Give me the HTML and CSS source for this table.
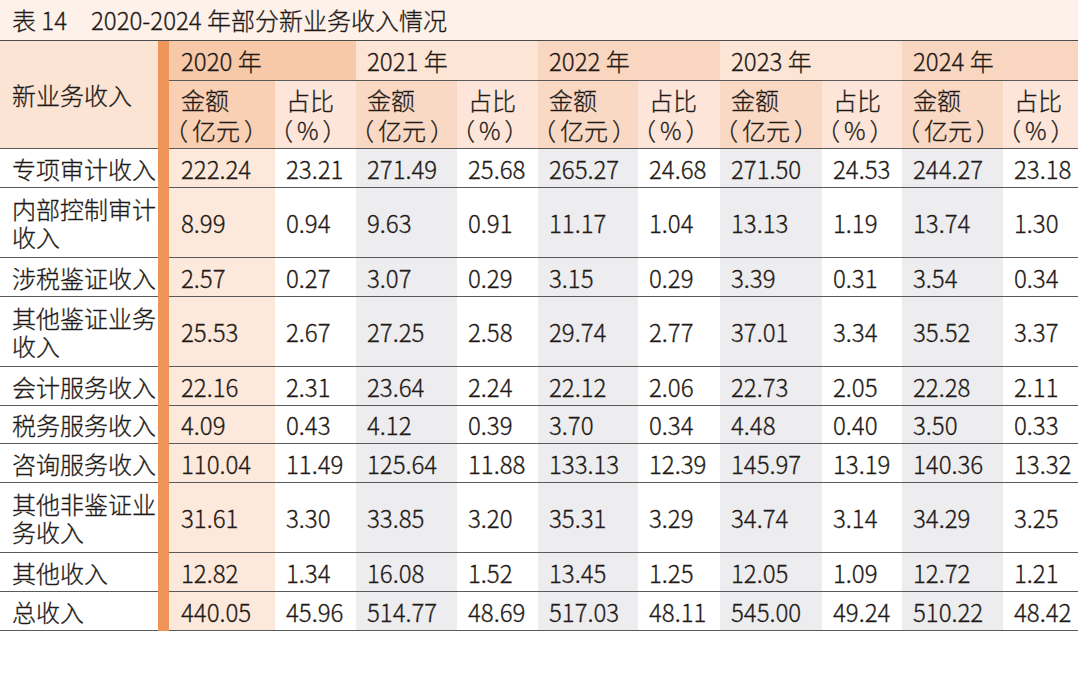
FILE: index.html
```html
<!DOCTYPE html>
<html lang="zh-CN">
<head>
<meta charset="utf-8">
<title>表 14 2020-2024 年部分新业务收入情况</title>
<link rel="stylesheet" href="styles.css">
</head>
<body>
<div class="page">
  <div class="title">表 14　2020-2024 年部分新业务收入情况</div>
  <div class="grid">
    <div class="cell head-label">新业务收入</div>
    <div class="bar"></div>

    <div class="cell year y-dark1">2020 年</div>
    <div class="cell year y-light">2021 年</div>
    <div class="cell year y-dark">2022 年</div>
    <div class="cell year y-light">2023 年</div>
    <div class="cell year y-dark">2024 年</div>

    <div class="cell sub amt1"><span>金额</span><span class="unit"><span class="pl">（</span>亿元<span class="pr">）</span></span></div>
    <div class="cell sub pct"><span>占比</span><span class="unit"><span class="pl">（</span>%<span class="pr">）</span></span></div>
    <div class="cell sub amt"><span>金额</span><span class="unit"><span class="pl">（</span>亿元<span class="pr">）</span></span></div>
    <div class="cell sub pct"><span>占比</span><span class="unit"><span class="pl">（</span>%<span class="pr">）</span></span></div>
    <div class="cell sub amt"><span>金额</span><span class="unit"><span class="pl">（</span>亿元<span class="pr">）</span></span></div>
    <div class="cell sub pct"><span>占比</span><span class="unit"><span class="pl">（</span>%<span class="pr">）</span></span></div>
    <div class="cell sub amt"><span>金额</span><span class="unit"><span class="pl">（</span>亿元<span class="pr">）</span></span></div>
    <div class="cell sub pct"><span>占比</span><span class="unit"><span class="pl">（</span>%<span class="pr">）</span></span></div>
    <div class="cell sub amt"><span>金额</span><span class="unit"><span class="pl">（</span>亿元<span class="pr">）</span></span></div>
    <div class="cell sub pct"><span>占比</span><span class="unit"><span class="pl">（</span>%<span class="pr">）</span></span></div>

    <div class="cell label">专项审计收入</div>
    <div class="cell v c1">222.24</div><div class="cell v">23.21</div>
    <div class="cell v g">271.49</div><div class="cell v">25.68</div>
    <div class="cell v g">265.27</div><div class="cell v">24.68</div>
    <div class="cell v g">271.50</div><div class="cell v">24.53</div>
    <div class="cell v g">244.27</div><div class="cell v">23.18</div>

    <div class="cell label two">内部控制审计<br>收入</div>
    <div class="cell v c1">8.99</div><div class="cell v">0.94</div>
    <div class="cell v g">9.63</div><div class="cell v">0.91</div>
    <div class="cell v g">11.17</div><div class="cell v">1.04</div>
    <div class="cell v g">13.13</div><div class="cell v">1.19</div>
    <div class="cell v g">13.74</div><div class="cell v">1.30</div>

    <div class="cell label">涉税鉴证收入</div>
    <div class="cell v c1">2.57</div><div class="cell v">0.27</div>
    <div class="cell v g">3.07</div><div class="cell v">0.29</div>
    <div class="cell v g">3.15</div><div class="cell v">0.29</div>
    <div class="cell v g">3.39</div><div class="cell v">0.31</div>
    <div class="cell v g">3.54</div><div class="cell v">0.34</div>

    <div class="cell label two">其他鉴证业务<br>收入</div>
    <div class="cell v c1">25.53</div><div class="cell v">2.67</div>
    <div class="cell v g">27.25</div><div class="cell v">2.58</div>
    <div class="cell v g">29.74</div><div class="cell v">2.77</div>
    <div class="cell v g">37.01</div><div class="cell v">3.34</div>
    <div class="cell v g">35.52</div><div class="cell v">3.37</div>

    <div class="cell label">会计服务收入</div>
    <div class="cell v c1">22.16</div><div class="cell v">2.31</div>
    <div class="cell v g">23.64</div><div class="cell v">2.24</div>
    <div class="cell v g">22.12</div><div class="cell v">2.06</div>
    <div class="cell v g">22.73</div><div class="cell v">2.05</div>
    <div class="cell v g">22.28</div><div class="cell v">2.11</div>

    <div class="cell label">税务服务收入</div>
    <div class="cell v c1">4.09</div><div class="cell v">0.43</div>
    <div class="cell v g">4.12</div><div class="cell v">0.39</div>
    <div class="cell v g">3.70</div><div class="cell v">0.34</div>
    <div class="cell v g">4.48</div><div class="cell v">0.40</div>
    <div class="cell v g">3.50</div><div class="cell v">0.33</div>

    <div class="cell label">咨询服务收入</div>
    <div class="cell v c1">110.04</div><div class="cell v">11.49</div>
    <div class="cell v g">125.64</div><div class="cell v">11.88</div>
    <div class="cell v g">133.13</div><div class="cell v">12.39</div>
    <div class="cell v g">145.97</div><div class="cell v">13.19</div>
    <div class="cell v g">140.36</div><div class="cell v">13.32</div>

    <div class="cell label two">其他非鉴证业<br>务收入</div>
    <div class="cell v c1">31.61</div><div class="cell v">3.30</div>
    <div class="cell v g">33.85</div><div class="cell v">3.20</div>
    <div class="cell v g">35.31</div><div class="cell v">3.29</div>
    <div class="cell v g">34.74</div><div class="cell v">3.14</div>
    <div class="cell v g">34.29</div><div class="cell v">3.25</div>

    <div class="cell label">其他收入</div>
    <div class="cell v c1">12.82</div><div class="cell v">1.34</div>
    <div class="cell v g">16.08</div><div class="cell v">1.52</div>
    <div class="cell v g">13.45</div><div class="cell v">1.25</div>
    <div class="cell v g">12.05</div><div class="cell v">1.09</div>
    <div class="cell v g">12.72</div><div class="cell v">1.21</div>

    <div class="cell label">总收入</div>
    <div class="cell v c1">440.05</div><div class="cell v">45.96</div>
    <div class="cell v g">514.77</div><div class="cell v">48.69</div>
    <div class="cell v g">517.03</div><div class="cell v">48.11</div>
    <div class="cell v g">545.00</div><div class="cell v">49.24</div>
    <div class="cell v g">510.22</div><div class="cell v">48.42</div>
  </div>
</div>
</body>
</html>
```
FILE: styles.css
```css
html, body {
  margin: 0;
  padding: 0;
  background: #ffffff;
}

body {
  font-family: "Noto Sans CJK SC", "Noto Sans", sans-serif;
  font-weight: 300;
  -webkit-text-stroke: 0.3px #1f1a17;
  color: #1f1a17;
  font-size: 24px;
}

.page {
  width: 1078px;
}

.title {
  height: 40px;
  line-height: 40px;
  padding-left: 12px;
  background: #fdf1e9;
  white-space: pre;
}

.grid {
  display: grid;
  grid-template-columns: 158px 11px 106px 81px 101px 81px 100px 82px 102px 80px 101px 75px;
  grid-template-rows: 40px 68px 39px 70px 39px 70px 39px 38px 39px 70px 39px 39px;
  border-top: 1px solid #4d4d4d;
}

.cell {
  box-sizing: border-box;
  border-bottom: 1px solid #5a5a5a;
  display: flex;
  align-items: center;
  padding-left: 11px;
  white-space: nowrap;
}

.bar {
  grid-column: 2;
  grid-row: 1 / -1;
  background: #f0955a;
}

.head-label {
  grid-column: 1;
  grid-row: 1 / 3;
  background: #fce4d5;
  padding-left: 12px;
}

.year {
  grid-column: span 2;
}

.y-dark1 { background: #f7c9a9; padding-left: 12px; }
.y-dark { background: #f9d6bf; }
.y-light { background: #fde5d6; }

.sub {
  flex-direction: column;
  align-items: flex-start;
  justify-content: center;
  line-height: 30px;
  padding-top: 1px;
}

.pl {
  margin-left: -17px;
  margin-right: 4px;
}

.pr {
  margin-left: 4px;
}

.amt1 { background: #f9d0b3; padding-left: 12px; }
.amt { background: #fad9c4; }
.pct { background: #fde6d9; }

.label {
  padding-left: 12px;
}

.two {
  line-height: 28px;
}

.v {
  background: #ffffff;
}

.c1 {
  background: #fde9dc;
  padding-left: 12px;
}

.g {
  background: #ededf0;
}
```
